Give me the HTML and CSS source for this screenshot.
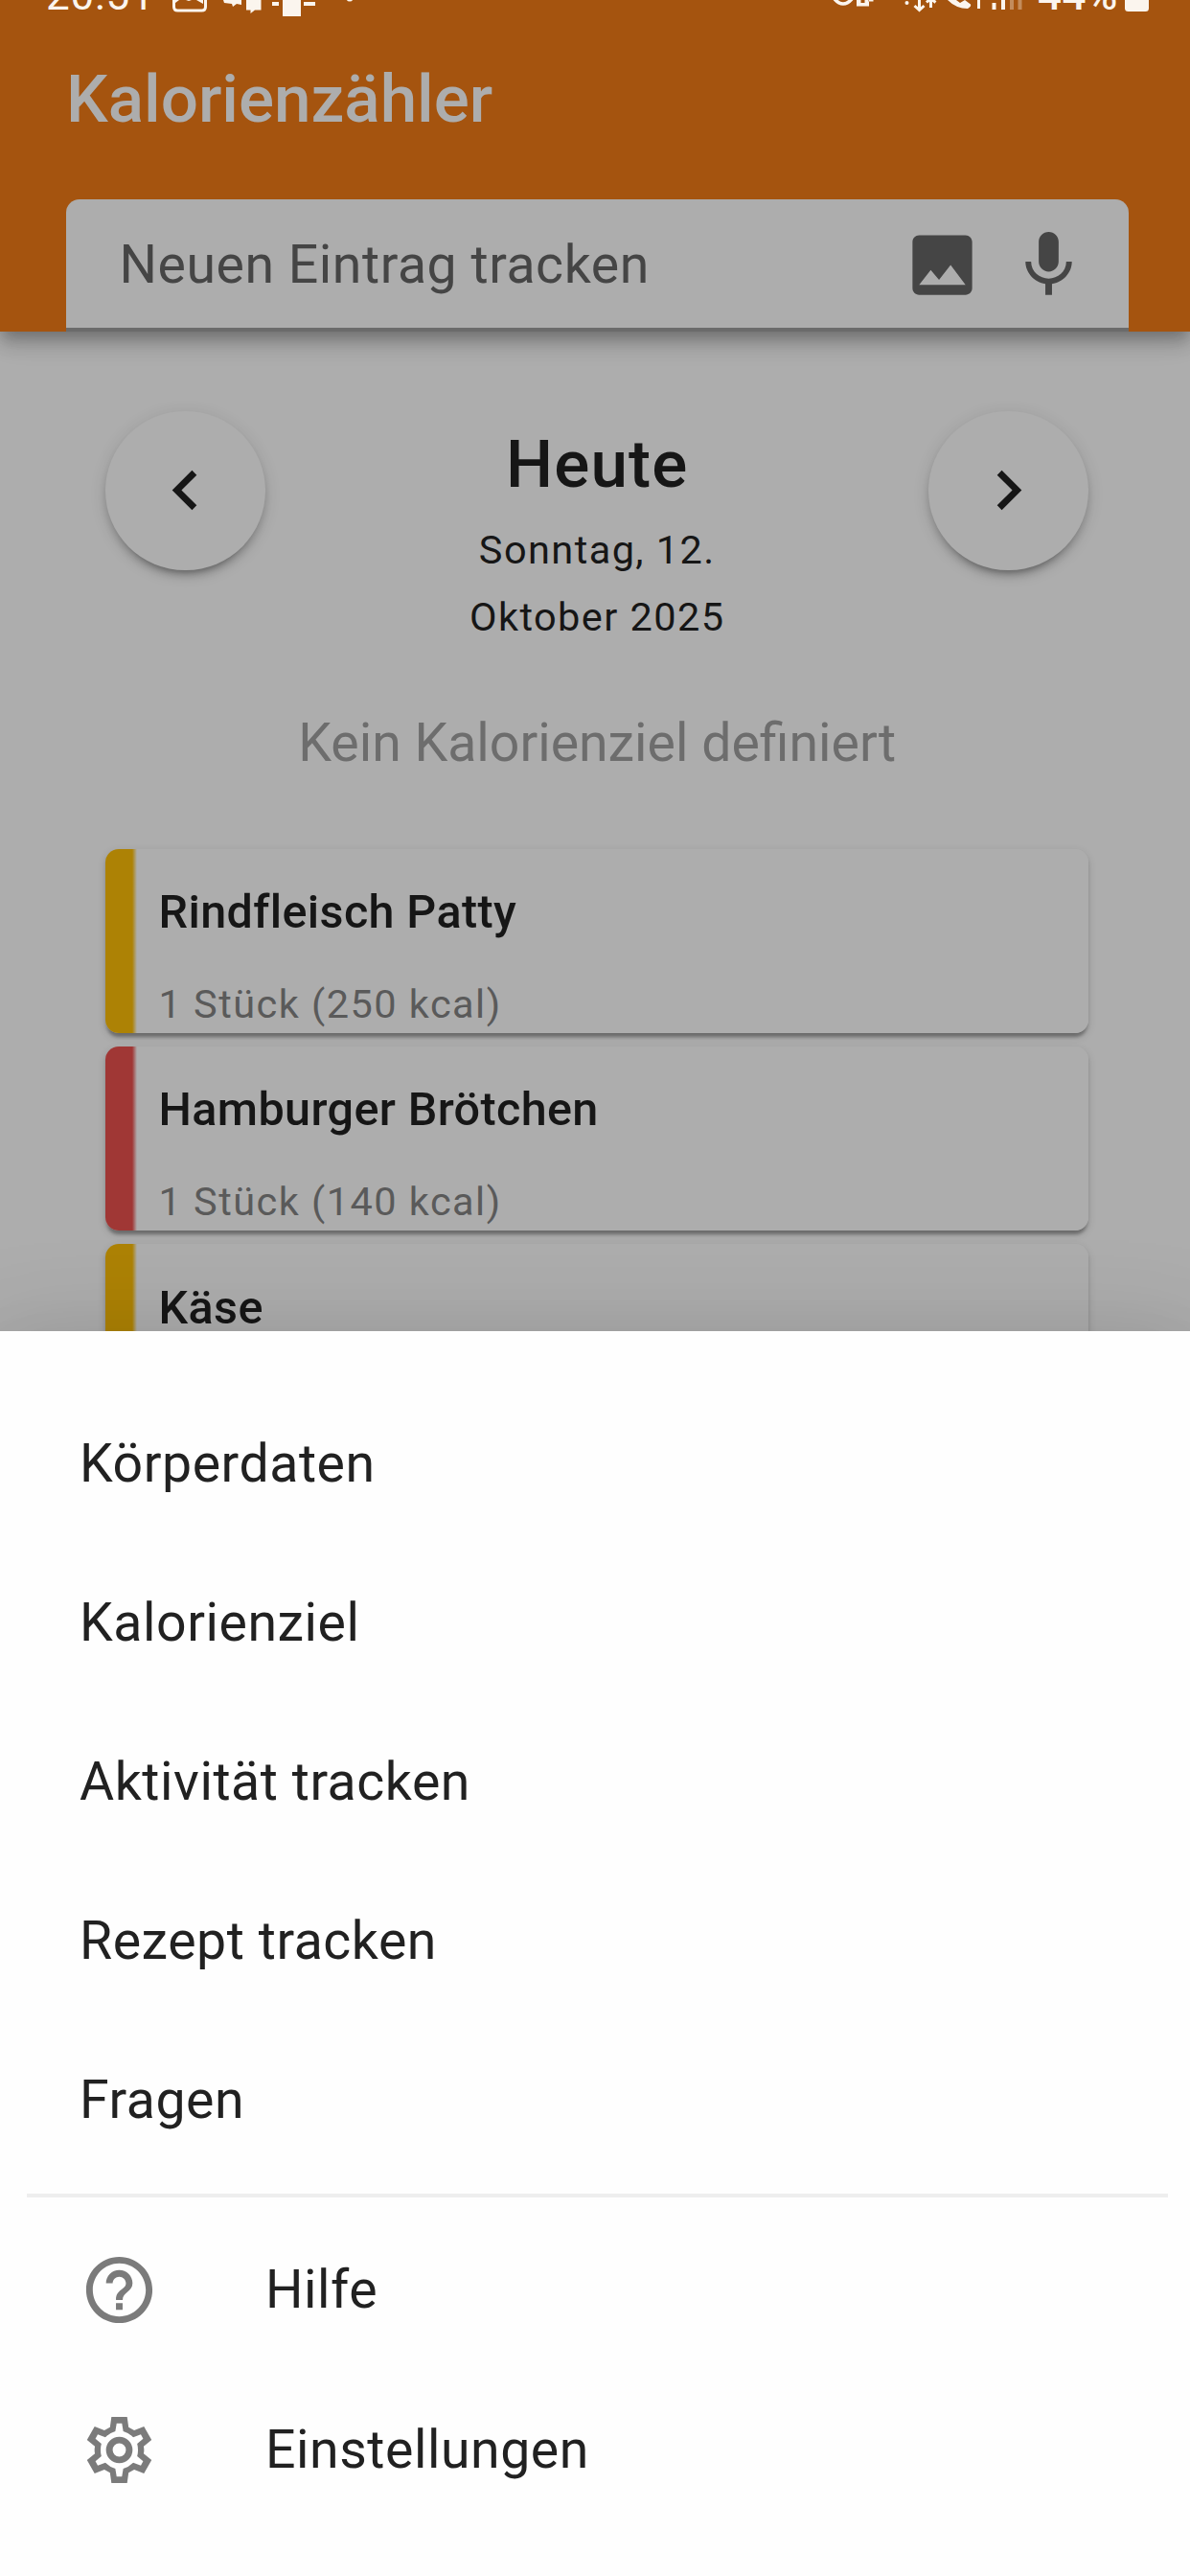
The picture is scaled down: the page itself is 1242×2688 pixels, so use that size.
FILE: index.html
```html
<!DOCTYPE html>
<html lang="de">
<head>
<meta charset="utf-8">
<title>Kalorienzähler</title>
<link rel="stylesheet" href="styles.css">
</head>
<body>
<div class="screen">
  <header class="header">
    <div class="status">
      <span class="status-time">20:51</span>
      <svg class="status-left" viewBox="180 0 190 20" fill="#fbf5ee">
        <path d="M181.500-4V7q0 4 4 4h25q4 0 4-4V-4" fill="none" stroke="#fbf5ee" stroke-width="3"/>
        <path d="M183 3l4-3h7l3 1 3-1h5l7 4V0h2v-2h-32z"/>
        <path d="M233 0h19v5l-5-1-4 3-1-3-8-1zM257 0h15.500v10.500H266L261.500 14v-3.500H257z"/>
        <path d="M284 2h7v4h-7zM317 2h12v4h-12zM295 0h19v17h-19z"/>
        <circle cx="365" cy="-2" r="3.500"/>
      </svg>
      <span class="status-gap"></span>
      <svg class="status-right" viewBox="868 0 215 20" fill="#fbf5ee">
        <path d="M871-1q9 10 18 0" fill="none" stroke="#fbf5ee" stroke-width="3.500"/>
        <path d="M894 0h4.500v3h4V0h4v1.500h5V0H907v6.500h-13z"/>
        <circle cx="946.500" cy="3" r="2"/>
        <path d="M959.500 0v10M954.500 6l5 4.500 5-4.500M971.500 0v8M967 2.500l4.500-4 5 4" fill="none" stroke="#fbf5ee" stroke-width="3"/>
        <path d="M989 0h9l4 3 5-3 6 4.500q1 2-3 4.500-12 0-21-9z"/>
        <path d="M1020 0h3v9h-3zM1035.500 3h4v7h-4zM1045 0h4v10h-4z"/>
        <path d="M1054 0h4v10h-4zM1062.500 0h4v10h-4z" opacity=".35"/>
      </svg>
      <span class="status-percent">44%</span>
      <svg class="status-battery" viewBox="0 0 25 20"><rect y="-10" width="25" height="22" rx="3.500" fill="#fbf5ee"/></svg>
    </div>
    <h1 class="title">Kalorienzähler</h1>
    <div class="search">
      <span class="search-text">Neuen Eintrag tracken</span>
      <svg class="icon" viewBox="0 0 24 24"><path d="M21 19V5c0-1.100-.9-2-2-2H5c-1.100 0-2 .9-2 2v14c0 1.100.9 2 2 2h14c1.100 0 2-.9 2-2zM8.500 13.500l2.500 3.010L14.500 12l4.500 6H5l3.500-4.500z"/></svg>
      <svg class="icon" viewBox="0 0 24 24"><path d="M12 14c1.660 0 2.990-1.340 2.990-3L15 5c0-1.660-1.340-3-3-3S9 3.340 9 5v6c0 1.660 1.340 3 3 3zm5.300-3c0 3-2.540 5.100-5.300 5.100S6.700 14 6.700 11H5c0 3.410 2.720 6.230 6 6.720V21h2v-3.280c3.280-.48 6-3.300 6-6.720h-1.700z"/></svg>
    </div>
  </header>

  <main class="content">
    <section class="day">
      <button class="round"><svg class="icon" viewBox="0 0 24 24"><path d="M15.410 7.410L14 6l-6 6 6 6 1.410-1.410L10.830 12z"/></svg></button>
      <div class="day-label">
        <h2 class="day-name">Heute</h2>
        <p class="day-date">Sonntag, 12.<br>Oktober 2025</p>
      </div>
      <button class="round"><svg class="icon" viewBox="0 0 24 24"><path d="M10 6L8.590 7.410 13.170 12l-4.580 4.590L10 18l6-6z"/></svg></button>
    </section>
    <p class="goal">Kein Kalorienziel definiert</p>
    <section class="entries">
      <article class="entry yellow"><h3 class="entry-name">Rindfleisch Patty</h3><p class="entry-info">1 Stück (250 kcal)</p></article>
      <article class="entry red"><h3 class="entry-name">Hamburger Brötchen</h3><p class="entry-info">1 Stück (140 kcal)</p></article>
      <article class="entry yellow"><h3 class="entry-name">Käse</h3></article>
    </section>
  </main>

  <nav class="sheet">
    <a class="item">Körperdaten</a>
    <a class="item">Kalorienziel</a>
    <a class="item">Aktivität tracken</a>
    <a class="item">Rezept tracken</a>
    <a class="item">Fragen</a>
    <hr class="divider">
    <a class="item"><svg class="icon" viewBox="0 0 24 24"><path d="M11 18h2v-2h-2v2zm1-16C6.480 2 2 6.480 2 12s4.480 10 10 10 10-4.480 10-10S17.520 2 12 2zm0 18c-4.410 0-8-3.590-8-8s3.590-8 8-8 8 3.590 8 8-3.590 8-8 8zm0-14c-2.210 0-4 1.790-4 4h2c0-1.100.9-2 2-2s2 .9 2 2c0 2-3 1.750-3 5h2c0-2.250 3-2.500 3-5 0-2.210-1.790-4-4-4z"/></svg>Hilfe</a>
    <a class="item"><svg class="icon" viewBox="-12 -12 24 24"><path fill-rule="evenodd" d="M-2.370-10H2.370L2.800-6.850 4.500-5.900 7.450-7.050 9.750-3.050 7.350-1.100Q7.600 0 7.350 1.100L9.750 3.050 7.450 7.050 4.500 5.900 2.800 6.850 2.370 10H-2.370L-2.800 6.850-4.500 5.900-7.450 7.050-9.750 3.050-7.350 1.100Q-7.600 0-7.350-1.100L-9.750-3.050-7.450-7.050-4.500-5.900-2.800-6.850zM-.8-8L-1.200-5.650Q-2.900-5.150-4.200-3.850L-6.500-4.700-7.200-3.400-5.400-1.850Q-5.900 0-5.400 1.850L-7.200 3.400-6.500 4.700-4.200 3.850Q-2.900 5.150-1.200 5.650L-.8 8H.8L1.200 5.650Q2.900 5.150 4.200 3.850L6.500 4.700 7.200 3.400 5.400 1.850Q5.900 0 5.400-1.850L7.200-3.400 6.500-4.700 4.200-3.850Q2.900-5.150 1.200-5.650L.8-8z"/><circle r="3" fill="none" stroke="currentColor" stroke-width="2"/></svg>Einstellungen</a>
  </nav>
</div>
</body>
</html>
```
FILE: styles.css
```css
* { box-sizing: border-box; margin: 0; padding: 0; }

body {
  font-family: Roboto, sans-serif;
  font-size: 55.4px;
  color: #161616;
  background: #adadad;
}

.screen {
  position: relative;
  width: 1242px;
  height: 2688px;
  overflow: hidden;
}

.icon { width: 83px; height: 83px; flex: none; fill: currentColor; }

/* Header */
.header {
  position: relative;
  height: 346px;
  padding: 0 64.5px 0 69px;
  background: #a5540f;
  box-shadow:
    0 7px 14px -3.500px rgba(0, 0, 0, .2),
    0 14px 17px 0 rgba(0, 0, 0, .14),
    0 3.500px 35px 0 rgba(0, 0, 0, .12);
}

.status {
  display: flex;
  align-items: flex-start;
  height: 20px;
  margin: 0 -64.5px 0 -69px;
  padding: 0 43px 0 48px;
  overflow: hidden;
  color: #fbf5ee;
  font-size: 44px;
  line-height: 20px;
}
.status-time { width: 132px; margin-top: -15px; letter-spacing: .8px; }
.status-left { width: 190px; height: 20px; }
.status-gap { flex: 1; }
.status-right { width: 215px; height: 20px; }
.status-percent { width: 91px; margin-top: -15px; letter-spacing: .5px; font-weight: 500; }
.status-battery { width: 25px; height: 20px; }

.title {
  color: #adadad;
  font-size: 69.2px;
  font-weight: 500;
  line-height: 167px;
}

.search {
  display: flex;
  align-items: center;
  gap: 28px;
  height: 138.5px;
  margin-top: 20.5px;
  padding: 0 42px 0 55.4px;
  border-radius: 14px 14px 0 0;
  background: #adadad;
  box-shadow: inset 0 -4px #6b6b6b;
  color: #454545;
}
.search-text { flex: 1; letter-spacing: .55px; }

/* Day view */
.content { padding: 82.7px 106px 0 110.4px; }

.day { display: flex; justify-content: space-between; align-items: flex-start; }
.day-label { padding-top: 21.3px; text-align: center; }
.day-name { font-size: 69.2px; font-weight: 500; line-height: 69px; letter-spacing: 1.1px; }
.day-date { margin-top: 20.4px; font-size: 41.5px; line-height: 69.2px; letter-spacing: 1.42px; }

.round {
  display: flex;
  align-items: center;
  justify-content: center;
  width: 166.5px;
  height: 166.5px;
  border: 0;
  border-radius: 50%;
  background: #adadad;
  color: #161616;
  box-shadow:
    0 10px 4px -7px rgba(0, 0, 0, .2),
    0 7px 7px 0 rgba(0, 0, 0, .14),
    0 3.500px 17px 0 rgba(0, 0, 0, .12);
}

.goal { margin-top: 63.5px; color: #6d6d6d; line-height: 69px; text-align: center; }

.entries { display: grid; gap: 14px; margin-top: 75.5px; }
.entry {
  display: flex;
  flex-direction: column;
  gap: 45.5px;
  height: 192.3px;
  padding: 41.3px 0 0 55.2px;
  border-radius: 14px;
  box-shadow:
    0 7px 3.500px -3.500px rgba(0, 0, 0, .2),
    0 3.500px 3.500px 0 rgba(0, 0, 0, .14),
    0 3.500px 10px 0 rgba(0, 0, 0, .12);
}
.yellow { background: linear-gradient(90deg, #ad8205 28px, #adadad 33px); }
.red { background: linear-gradient(90deg, #a03735 28px, #adadad 33px); }
.entry-name { font-size: 48.5px; font-weight: 500; line-height: 50px; letter-spacing: .37px; }
.entry-info { color: #5a5a5a; font-size: 41.5px; line-height: 50px; letter-spacing: 1.46px; }

/* Menu sheet lying over the day view */
.sheet {
  position: absolute;
  inset: 1388.6px 0 0 0;
  padding-top: 55.4px;
  background: #fefefe;
  color: #212121;
  box-shadow:
    0 28px 35px -17px rgba(0, 0, 0, .2),
    0 55px 83px 7px rgba(0, 0, 0, .14),
    0 21px 104px 17px rgba(0, 0, 0, .12);
}
.item {
  display: flex;
  align-items: center;
  gap: 111px;
  height: 166.15px;
  padding-left: 83px;
  letter-spacing: .55px;
}
.item .icon { color: #7b7b7b; }
.divider { height: 4px; margin: 14.5px 23px 13.7px 27.5px; border: 0; background: #eee; }
```
